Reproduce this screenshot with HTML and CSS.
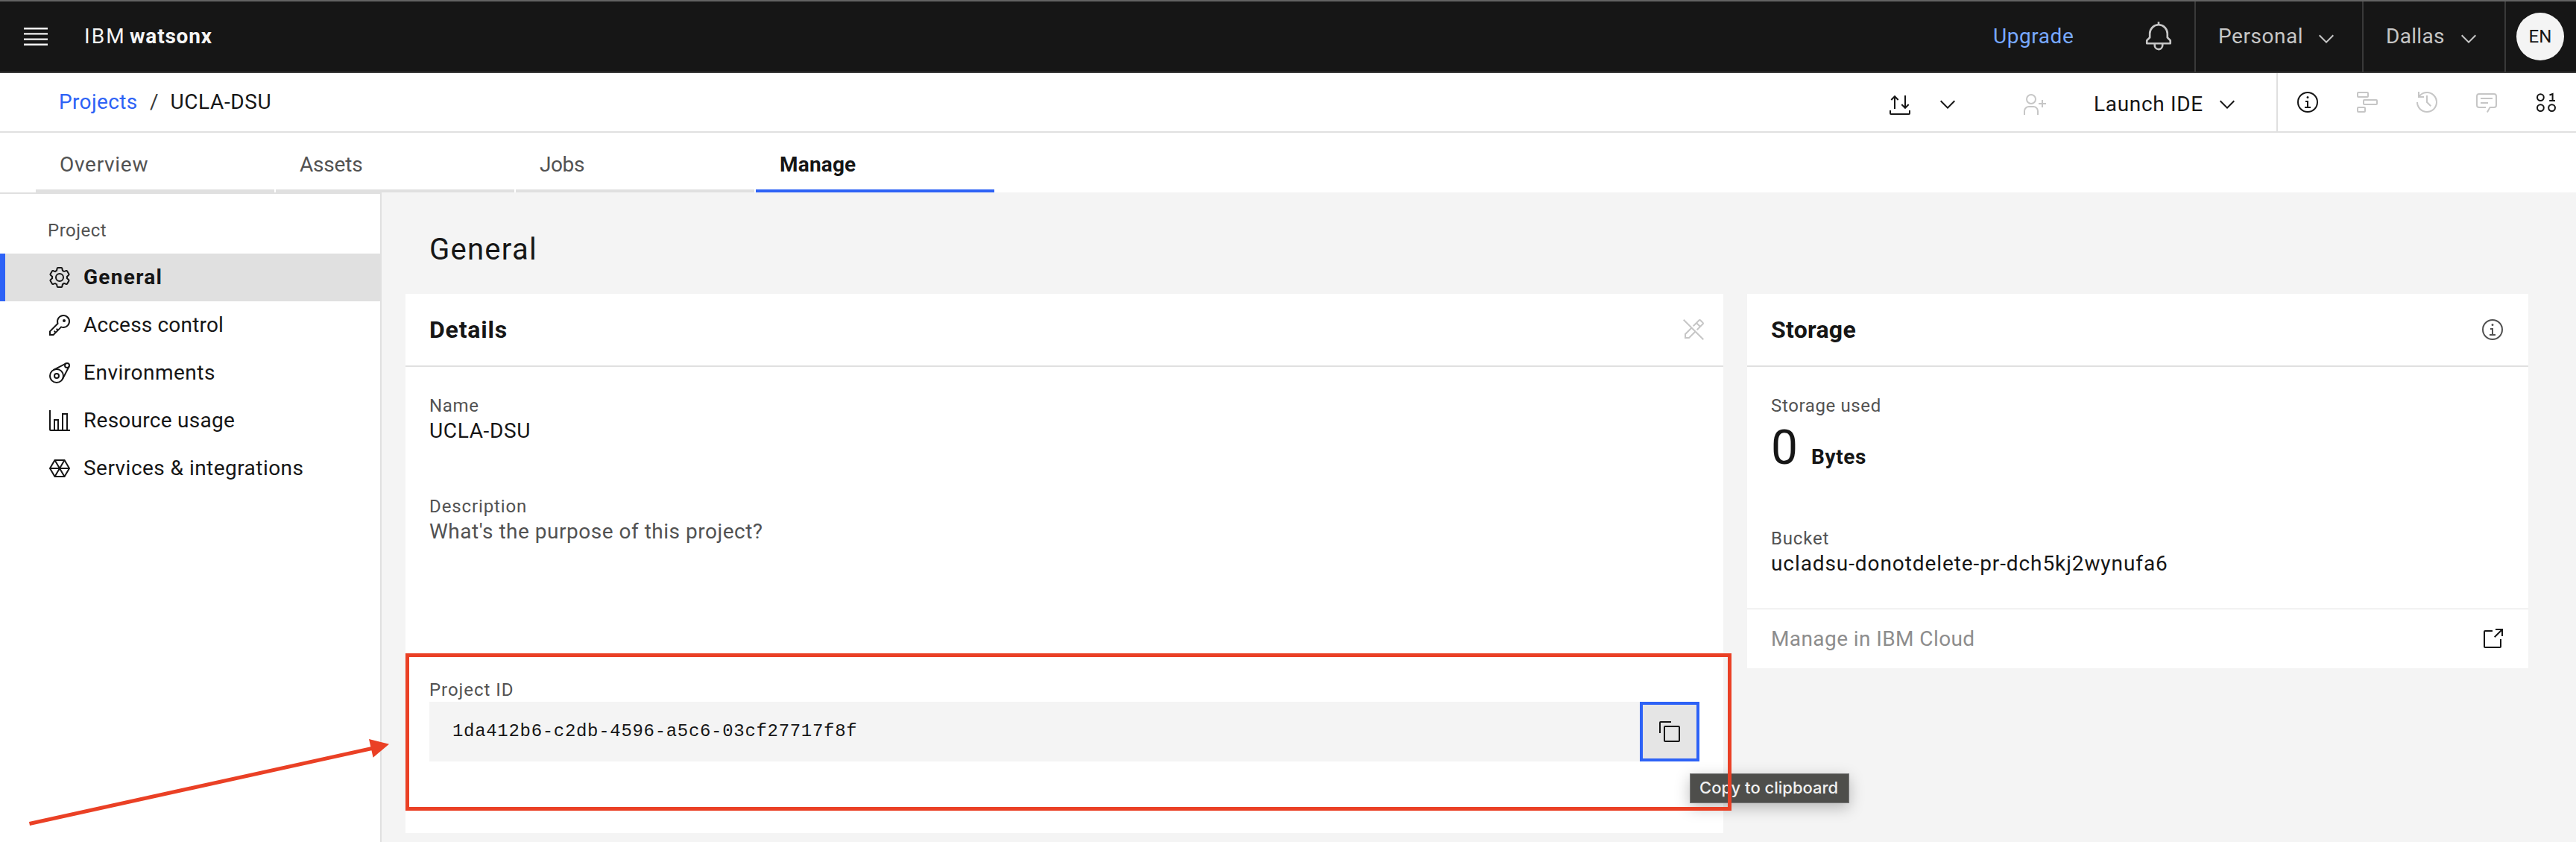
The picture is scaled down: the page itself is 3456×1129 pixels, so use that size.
FILE: index.html
```html
<!DOCTYPE html>
<html lang="en">
<head>
<meta charset="utf-8">
<title>UCLA-DSU - IBM watsonx</title>
<link rel="stylesheet" href="styles.css">
</head>
<body>
<svg class="symbols" aria-hidden="true">
  <symbol id="chevron" viewBox="0 0 32 32"><path d="M16 22L6 12 7.4 10.6 16 19.2 24.6 10.6 26 12z"/></symbol>
  <symbol id="info" viewBox="0 0 32 32"><circle cx="16" cy="16" r="13" fill="none" stroke="currentColor" stroke-width="2"/><path d="M17 22V14H13V16H15V22H12V24H20V22ZM16 8a1.5 1.5 0 1 0 1.5 1.5A1.5 1.5 0 0 0 16 8Z"/></symbol>
</svg>

<header class="topbar">
  <button class="menu" aria-label="Menu"><svg class="menu-icon" viewBox="0 0 20 20"><path d="M2 14.8h16V16H2zM2 11.2h16v1.2H2zM2 7.6h16v1.2H2zM2 4h16v1.2H2z"/></svg></button>
  <a class="brand"><span class="brand-ibm">IBM</span><b class="brand-product">watsonx</b></a>
  <nav class="topbar-actions">
    <a class="upgrade">Upgrade</a>
    <svg class="bell" viewBox="0 0 32 32"><path d="M28.7071,19.293,26,16.5859V13a10.0136,10.0136,0,0,0-9-9.9492V1H15V3.0508A10.0136,10.0136,0,0,0,6,13v3.5859L3.2929,19.293A1,1,0,0,0,3,20v3a1,1,0,0,0,1,1h7v.7768a5.152,5.152,0,0,0,4.5,5.1987A5.0057,5.0057,0,0,0,21,25V24h7a1,1,0,0,0,1-1V20A1,1,0,0,0,28.7071,19.293ZM19,25a3,3,0,0,1-6,0V24h6Zm8-3H5V20.4141L7.707,17.707A1,1,0,0,0,8,17V13a8,8,0,0,1,16,0v4a1,1,0,0,0,.293.707L27,20.4141Z"/></svg>
    <div class="switcher account"><span>Personal</span><svg class="icon"><use href="#chevron"/></svg></div>
    <div class="switcher region"><span>Dallas</span><svg class="icon"><use href="#chevron"/></svg></div>
    <div class="profile"><span class="avatar">EN</span></div>
  </nav>
</header>

<div class="toolbar">
  <nav class="breadcrumb"><a class="crumb-link">Projects</a><span class="crumb-slash">/</span><span class="crumb-current">UCLA-DSU</span></nav>
  <div class="toolbar-actions">
    <svg class="icon transfer" viewBox="0 0 32 32"><g class="stroke"><path d="M9 21V4M4.3 9 9 4.2 13.7 9M23 3V20M18.3 15 23 19.8 27.7 15M3 23v4a1 1 0 0 0 1 1H28a1 1 0 0 0 1-1V23"/></g></svg>
    <svg class="icon transfer-more"><use href="#chevron"/></svg>
    <svg class="icon add-user disabled" viewBox="0 0 32 32"><g class="stroke"><circle cx="12" cy="9" r="6"/><path d="M3 30V25a6 6 0 0 1 6-6h6a6 6 0 0 1 6 6v5M27 10V20M22 15H32"/></g></svg>
    <div class="launch"><span>Launch IDE</span><svg class="icon"><use href="#chevron"/></svg></div>
  </div>
  <div class="panel-actions">
    <svg class="icon"><use href="#info"/></svg>
    <svg class="icon disabled" viewBox="0 0 32 32"><g class="stroke"><rect x="3" y="3" width="14" height="6" rx="1"/><rect x="11" y="13" width="18" height="6" rx="1"/><rect x="3" y="23" width="10" height="6" rx="1"/></g></svg>
    <svg class="icon disabled" viewBox="0 0 32 32"><path d="M20.59 22 15 16.41V7H17V15.58L22 20.59ZM16,2A13.94,13.94,0,0,0,6,6.23V2H4v8h8V8H7.08A12,12,0,1,1,4,16H2A14,14,0,1,0,16,2Z"/></svg>
    <svg class="icon disabled" viewBox="0 0 32 32"><path d="M17.74,30,16,29l4-7h6a2,2,0,0,0,2-2V8a2,2,0,0,0-2-2H6A2,2,0,0,0,4,8V20a2,2,0,0,0,2,2h9v2H6a4,4,0,0,1-4-4V8A4,4,0,0,1,6,4H26a4,4,0,0,1,4,4V20a4,4,0,0,1-4,4H21.16ZM8 10H24v2H8ZM8 16H18v2H8Z"/></svg>
    <svg class="icon" viewBox="0 0 32 32"><g class="stroke"><circle cx="8.4" cy="9.6" r="4.4"/><circle cx="8.4" cy="23.6" r="4.4"/><circle cx="23.6" cy="23.6" r="4.4"/><path d="M20.5 6.5 24.6 5V14M20.2 14H28"/></g></svg>
  </div>
</div>

<nav class="tabs">
  <a class="tab tab-overview">Overview</a>
  <a class="tab tab-assets">Assets</a>
  <a class="tab tab-jobs">Jobs</a>
  <a class="tab tab-manage selected">Manage</a>
</nav>

<div class="page">
  <aside class="sidebar">
    <div class="sidebar-title">Project</div>
    <a class="side-item active"><svg class="icon" viewBox="0 0 32 32"><path d="M27,16.76c0-.25,0-.5,0-.76s0-.51,0-.77l1.92-1.68A2,2,0,0,0,29.3,11L26.94,7a2,2,0,0,0-1.73-1,2,2,0,0,0-.64.1l-2.43.82a11.35,11.35,0,0,0-1.31-.75l-.51-2.52a2,2,0,0,0-2-1.61H13.64a2,2,0,0,0-2,1.61l-.51,2.52a11.48,11.48,0,0,0-1.32.75L7.43,6.06A2,2,0,0,0,6.79,6,2,2,0,0,0,5.06,7L2.7,11a2,2,0,0,0,.41,2.51L5,15.24c0,.25,0,.5,0,.76s0,.51,0,.77L3.11,18.45A2,2,0,0,0,2.7,21L5.06,25a2,2,0,0,0,1.73,1,2,2,0,0,0,.64-.1l2.43-.82a11.35,11.35,0,0,0,1.31.75l.51,2.52a2,2,0,0,0,2,1.61h4.72a2,2,0,0,0,2-1.61l.51-2.52a11.48,11.48,0,0,0,1.32-.75l2.42.82a2,2,0,0,0,.64.1,2,2,0,0,0,1.73-1L29.3,21a2,2,0,0,0-.41-2.51ZM25.21,24l-3.43-1.16a8.86,8.86,0,0,1-2.71,1.57L18.36,28H13.64l-.71-3.55a9.36,9.36,0,0,1-2.7-1.57L6.79,24,4.43,20l2.72-2.4a8.9,8.9,0,0,1,0-3.13L4.43,12,6.79,8l3.43,1.16a8.86,8.86,0,0,1,2.71-1.57L13.64,4h4.72l.71,3.55a9.36,9.36,0,0,1,2.7,1.57L25.21,8,27.57,12l-2.72,2.4a8.9,8.9,0,0,1,0,3.13L27.57,20Z"/><circle cx="16" cy="16" r="5" fill="none" stroke="currentColor" stroke-width="2"/></svg><span class="lbl-general">General</span></a>
    <a class="side-item"><svg class="icon" viewBox="0 0 32 32"><path d="M21,2a8.9977,8.9977,0,0,0-8.6119,11.6118L2,24v6H8L18.3881,19.6118A9,9,0,1,0,21,2Zm0,16a7.0125,7.0125,0,0,1-2.0322-.3022L17.821,17.35l-.8472.8472-3.1811,3.1812L12.4141,20,11,21.4141l1.3787,1.3786-1.5859,1.586L9.4141,23,8,24.4141l1.3787,1.3786L7.1716,28H4V24.8284l9.8023-9.8023.8472-.8474-.3473-1.1467A7,7,0,1,1,21,18Z"/><circle cx="22" cy="10" r="2"/></svg><span class="lbl-access">Access control</span></a>
    <a class="side-item"><svg class="icon" viewBox="0 0 32 32"><g class="stroke"><circle cx="12" cy="20" r="9"/><circle cx="12" cy="20" r="3"/><circle cx="26" cy="6" r="3"/><path d="M7.6 12.1 24.5 3.4M19.9 24.4 28.6 7.5"/></g></svg><span class="lbl-env">Environments</span></a>
    <a class="side-item"><svg class="icon" viewBox="0 0 32 32"><g class="stroke"><path d="M3 2V28a1 1 0 0 0 1 1H30M9 28V15H14V28M20 28V7H26V28"/></g></svg><span class="lbl-usage">Resource usage</span></a>
    <a class="side-item"><svg class="icon" viewBox="0 0 32 32"><g class="stroke"><path d="M9.5 5H22.5L29 16 22.5 27H9.5L3 16ZM9.5 5 22.5 27M22.5 5 9.5 27M3 16H29"/></g></svg><span class="lbl-services">Services &amp; integrations</span></a>
  </aside>

  <main class="content">
    <h1 class="page-title">General</h1>
    <div class="cards">
      <section class="card details">
        <div class="card-head"><h2 class="details-title">Details</h2><svg class="icon disabled" viewBox="0 0 32 32"><path d="M30 28.6L3.4 2 2 3.4l10.1 10.1L4 21.6V28h6.4l8.1-8.1L28.6 30 30 28.6zM9.6 26H6v-3.6l7.5-7.5 3.6 3.6L9.6 26zM29.4 6.2L25.8 2.6c-.8-.8-2-.8-2.8 0l-8 8 1.4 1.4L20 8.4l3.6 3.6L20 15.6l1.4 1.4 8-8C30.2 8.2 30.2 7 29.4 6.2zM25 10.6L21.4 7l3-3L28 7.6 25 10.6z"/></svg></div>
        <div class="details-body">
          <div class="label">Name</div>
          <div class="value">UCLA-DSU</div>
          <div class="label label-description">Description</div>
          <div class="value placeholder">What's the purpose of this project?</div>
          <div class="label label-id">Project ID</div>
          <div class="snippet">
            <code>1da412b6-c2db-4596-a5c6-03cf27717f8f</code>
            <div class="copy"><svg class="icon" viewBox="0 0 32 32"><path d="M28,10V28H10V10H28m0-2H10a2,2,0,0,0-2,2V28a2,2,0,0,0,2,2H28a2,2,0,0,0,2-2V10a2,2,0,0,0-2-2ZM4,18H2V4A2,2,0,0,1,4,2H18V4H4Z"/></svg><span class="tooltip">Copy to clipboard</span></div>
          </div>
        </div>
      </section>
      <section class="card storage">
        <div class="card-head"><h2 class="storage-title">Storage</h2><svg class="icon muted"><use href="#info"/></svg></div>
        <div class="storage-body">
          <div class="label label-used">Storage used</div>
          <div class="amount"><span class="number">0</span><b class="unit">Bytes</b></div>
          <div class="label label-bucket">Bucket</div>
          <div class="value bucket">ucladsu-donotdelete-pr-dch5kj2wynufa6</div>
        </div>
        <div class="card-foot"><span>Manage in IBM Cloud</span><svg class="icon" viewBox="0 0 32 32"><path d="M26 28H6a2 2 0 0 1-2-2V6A2 2 0 0 1 6 4H16V6H6V26H26V16h2V26A2 2 0 0 1 26 28ZM20 2V4H26.586L18 12.586 19.414 14 28 5.414V12H30V2Z"/></svg></div>
      </section>
    </div>
  </main>
</div>

<div class="highlight"></div>
<svg class="arrow" viewBox="0 0 490 130"><path class="arrow-line" d="M4.5 116.5 464 15.5"/><path class="arrow-head" d="M460 3 487 9.7 465.6 27.7Z"/></svg>
</body>
</html>
```
FILE: styles.css
```css
* { box-sizing: border-box; }

body {
  margin: 0;
  position: relative;
  height: 1129px;
  overflow: hidden;
  display: flex;
  flex-direction: column;
  background: #fff;
  color: #161616;
  font: 400 28px/36px Roboto, sans-serif;
  white-space: nowrap;
}

h1, h2 { margin: 0; }
svg { fill: currentColor; flex: none; display: block; }
.symbols { position: absolute; width: 0; height: 0; }
.icon { width: 32px; height: 32px; }
.stroke { fill: none; stroke: currentColor; stroke-width: 2; }
.disabled { color: #c6c6c6; }
.muted { color: #525252; }

/* Global header */
.topbar {
  height: 98px;
  flex: none;
  display: flex;
  align-items: center;
  background: #161616;
  color: #f4f4f4;
  border-top: 2px solid #636363;
  border-bottom: 2px solid #393939;
}
.menu { width: 113px; padding: 0 0 0 28px; border: 0; background: none; color: inherit; }
.menu-icon { width: 40px; height: 40px; }
.brand { display: flex; }
.brand-ibm { width: 61px; letter-spacing: 2.1px; }
.brand-product { letter-spacing: 0.8px; }
.topbar-actions {
  height: 100%;
  margin-left: auto;
  display: flex;
  align-items: center;
  color: #c6c6c6;
}
.upgrade { width: 201px; color: #78a9ff; letter-spacing: 0.57px; }
.bell { width: 42px; height: 42px; margin-right: 27px; }
.switcher {
  height: 100%;
  padding: 0 32px 0 30px;
  border-left: 2px solid #393939;
  display: flex;
  align-items: center;
  justify-content: space-between;
}
.switcher .icon { margin-top: 6px; }
.account { width: 225px; letter-spacing: 0.54px; }
.region { width: 191px; letter-spacing: 0.31px; }
.profile { width: 96px; height: 100%; padding-left: 14px; border-left: 2px solid #393939; display: flex; align-items: center; }
.avatar {
  width: 64px;
  height: 64px;
  border-radius: 50%;
  background: #f4f4f4;
  color: #161616;
  font-size: 24px;
  line-height: 64px;
  text-align: center;
}

/* Breadcrumb and project actions */
.toolbar {
  height: 80px;
  flex: none;
  display: flex;
  border-bottom: 2px solid #e0e0e0;
}
.breadcrumb { display: flex; align-items: center; padding-left: 79px; }
.crumb-link { width: 122px; color: #2d62f6; letter-spacing: 0.36px; }
.crumb-slash { width: 27.5px; color: #393939; }
.crumb-current { letter-spacing: 0.61px; }
.toolbar-actions { margin-left: auto; padding: 6px 50px 0 0; display: flex; align-items: center; }
.transfer { margin: 2px 32px 0 0; }
.transfer-more { margin-right: 84px; }
.add-user { margin-right: 64px; }
.launch { width: 195px; display: flex; justify-content: space-between; align-items: center; letter-spacing: 0.68px; }
.panel-actions { display: flex; align-items: center; gap: 48px; padding: 0 24px; border-left: 2px solid #e0e0e0; }

/* Tabs */
.tabs { height: 80px; flex: none; display: flex; gap: 2px; padding-left: 48px; }
.tab {
  width: 320px;
  padding: 25px 0 0 32px;
  border-bottom: 4px solid #e0e0e0;
  color: #525252;
}
.tab-overview { letter-spacing: 0.71px; }
.tab-assets { letter-spacing: -0.2px; }
.tab-jobs { letter-spacing: -0.4px; }
.tab-manage { letter-spacing: 0.19px; }
.tab.selected { border-color: #2d62f6; color: #161616; font-weight: 700; }

/* Side navigation */
.page { flex: 1; display: flex; background: #f4f4f4; }
.sidebar {
  width: 512px;
  flex: none;
  padding-top: 33px;
  background: #fff;
  border-top: 2px solid #e0e0e0;
  border-right: 2px solid #e0e0e0;
}
.sidebar-title { padding-left: 64px; margin-bottom: 15px; font-size: 24px; line-height: 32px; letter-spacing: 0.51px; color: #525252; }
.side-item { height: 64px; padding-left: 64px; display: flex; align-items: center; gap: 16px; }
.side-item.active { padding-left: 57px; border-left: 7px solid #2d62f6; background: #e0e0e0; font-weight: 700; }
.lbl-general { letter-spacing: 1.28px; }
.lbl-access { letter-spacing: 0.18px; }
.lbl-env { letter-spacing: 0.5px; }
.lbl-usage { letter-spacing: 0.27px; }
.lbl-services { letter-spacing: 0.46px; }

/* Content */
.content { flex: 1; padding: 51px 64px 0 32px; }
.page-title { padding-left: 32px; font-size: 40px; font-weight: 400; line-height: 52px; letter-spacing: 1.27px; }
.cards { display: flex; align-items: flex-start; gap: 32px; margin-top: 33px; }
.card { background: #fff; }
.card-head {
  height: 98px;
  padding: 0 24px 0 32px;
  border-bottom: 2px solid #e0e0e0;
  display: flex;
  align-items: center;
  justify-content: space-between;
}
.card-head h2 { font-size: 32px; font-weight: 700; line-height: 40px; }
.details-title { letter-spacing: 0.79px; }
.storage-title { letter-spacing: 0.27px; }
.label { font-size: 24px; line-height: 32px; letter-spacing: 0.7px; color: #525252; }
.value { letter-spacing: 0.64px; }

.details { width: 1768px; height: 723px; }
.details-body { padding: 36px 32px 0; }
.label-description { margin-top: 67px; letter-spacing: 0.88px; }
.placeholder { color: #525252; letter-spacing: 0.51px; }
.label-id { margin-top: 178px; letter-spacing: 0.96px; }
.snippet { height: 80px; display: flex; justify-content: space-between; align-items: center; background: #f4f4f4; }
.snippet code { padding-left: 31px; font: 24px/32px "Liberation Mono", monospace; letter-spacing: 0.69px; }
.copy {
  position: relative;
  width: 80px;
  height: 80px;
  border: 4px solid #2d62f6;
  background: #e5e5e5;
  display: flex;
  align-items: center;
  justify-content: center;
}
.tooltip {
  position: absolute;
  left: 63px;
  top: 92px;
  width: 214px;
  height: 40px;
  padding-left: 12px;
  border: 1px solid #777;
  background: #4e4e4b;
  box-shadow: 0 6px 20px rgba(0, 0, 0, 0.25);
  color: #f0f0f0;
  font: 500 22px/37px Inter, sans-serif;
}

.storage { width: 1048px; height: 502px; display: flex; flex-direction: column; }
.storage .card-head, .card-foot { padding-right: 32px; }
.storage-body { flex: 1; padding: 36px 32px 0; }
.label-used { letter-spacing: 0.63px; }
.amount { height: 72px; margin-top: 5px; line-height: 72px; display: flex; align-items: baseline; }
.number { width: 54px; font-size: 64px; }
.unit { letter-spacing: 0.61px; }
.label-bucket { margin-top: 70px; line-height: 31px; letter-spacing: 0.8px; }
.bucket { letter-spacing: 0.91px; }
.card-foot {
  height: 80px;
  padding-left: 32px;
  border-top: 1px solid #e0e0e0;
  display: flex;
  align-items: center;
  justify-content: space-between;
  letter-spacing: 0.41px;
}
.card-foot span { color: #8d8d8d; }

/* Annotations drawn over the page */
.highlight { position: absolute; left: 544px; top: 876px; width: 1779px; height: 211px; border: 5px solid #ea4025; }
.arrow { position: absolute; left: 35px; top: 988px; width: 490px; height: 130px; }
.arrow-line { fill: none; stroke: #ea4025; stroke-width: 5; }
.arrow-head { fill: #ea4025; }
```
